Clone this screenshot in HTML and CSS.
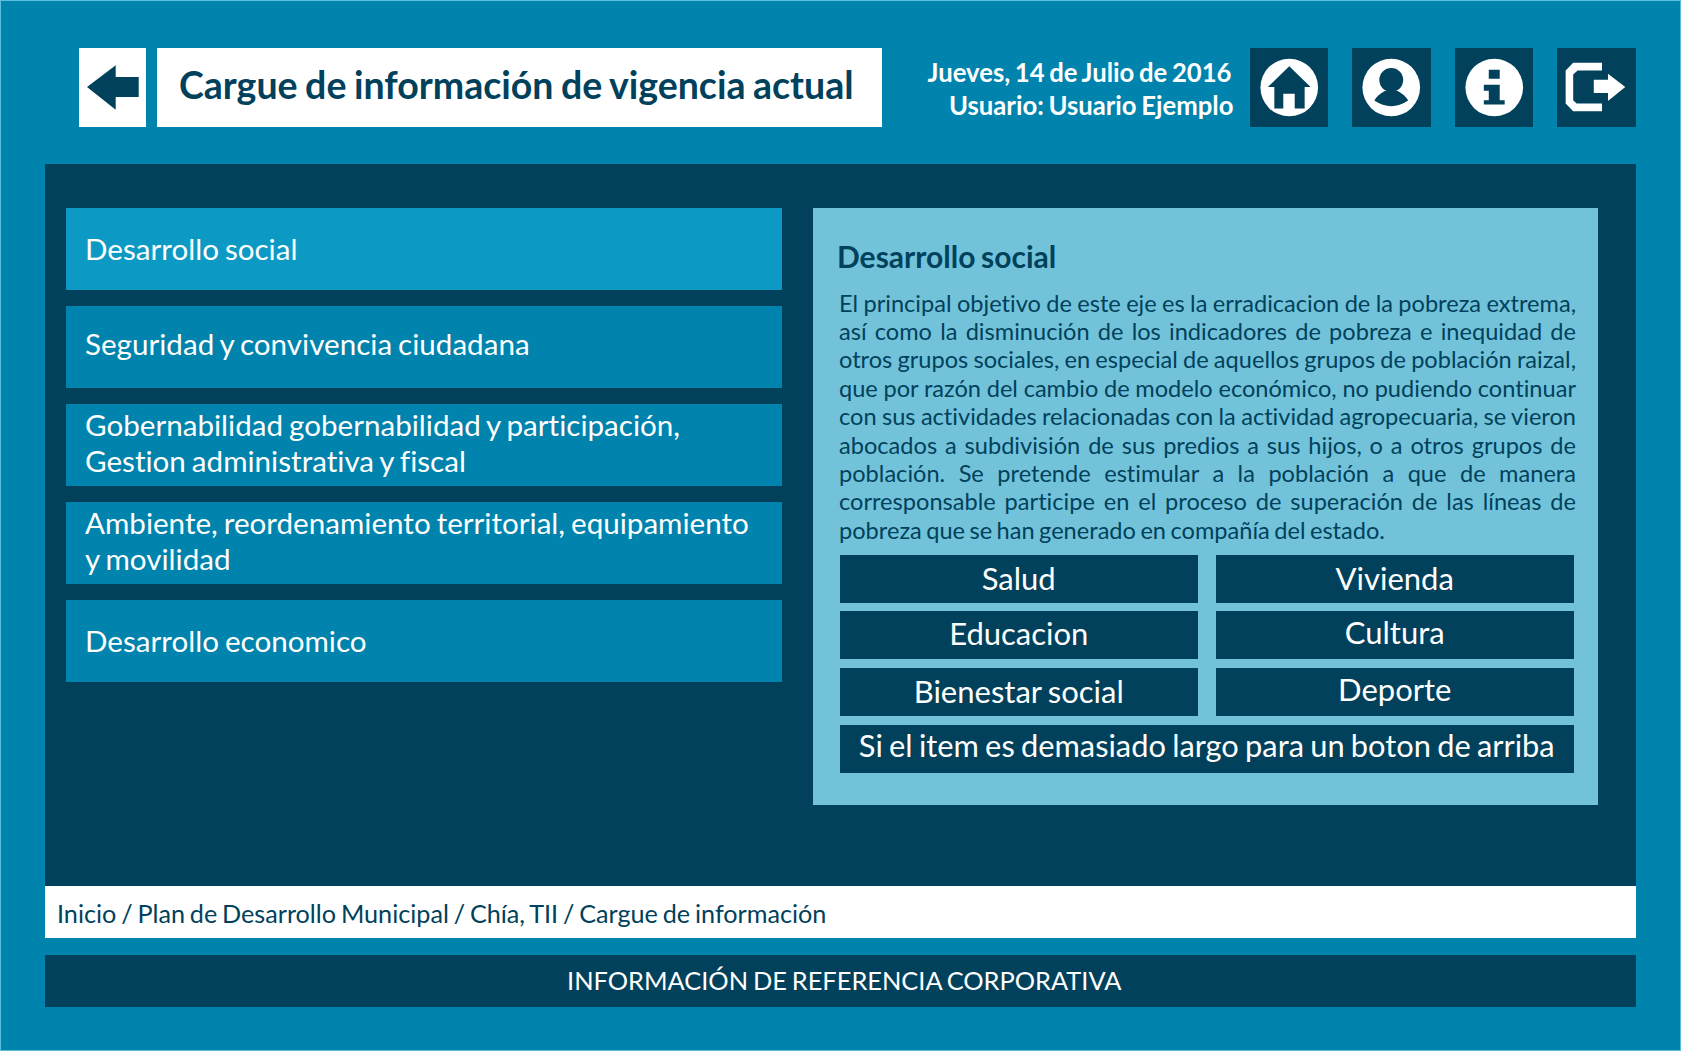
FILE: index.html
```html
<!DOCTYPE html>
<html lang="es">
<head>
<meta charset="utf-8">
<title>Cargue de información</title>
<link rel="stylesheet" href="styles.css">
</head>
<body>
<div class="page">
  <header class="header">
    <a class="back"><svg viewBox="0 0 67 79" width="67" height="79"><path class="dark" d="M8 39 36.7 17.3V29H59.7V49H36.7V61.7Z"/></svg></a>
    <h1 class="title">Cargue de información de vigencia actual</h1>
    <div class="meta">
      <div class="meta-date">Jueves, 14 de Julio de 2016</div>
      <div class="meta-user">Usuario: Usuario Ejemplo</div>
    </div>
    <nav class="icons">
      <a class="icon"><svg viewBox="0 0 79 79"><circle class="light" cx="39.5" cy="39.5" r="29"/><path class="dark" d="M39.5 18 61 39H55V60.7H45V45.7H33.5V60.7H24.5V39H18Z"/></svg></a>
      <a class="icon"><svg viewBox="0 0 79 79"><circle class="light" cx="39.5" cy="39.5" r="29"/><circle class="dark" cx="39.5" cy="32" r="12"/><path class="dark" d="M22.5 52.5Q26 46.5 33 43H46Q53 46.5 56.5 52.5Q39.5 64 22.5 52.5Z"/></svg></a>
      <a class="icon"><svg viewBox="0 0 79 79"><circle class="light" cx="39.5" cy="39.5" r="29"/><path class="dark" d="M34 21.7H45V30.7H34ZM29 36.7H45V52.3H50V56.7H29V52.3H34V42.7H29Z"/></svg></a>
      <a class="icon"><svg viewBox="0 0 79 79"><path class="light" d="M45.3 14.7H16.3L8.7 22.3V55.7L16.3 63.3H45.3V55.7H19.7L16.3 52.3V26.3L20.7 22.3H45.3ZM37 31.7H51.3V25.7L68.7 39 51.3 53V45H37Z"/></svg></a>
    </nav>
  </header>

  <main class="main">
    <div class="columns">
      <ul class="menu">
        <li class="menu-item active low">Desarrollo social</li>
        <li class="menu-item">Seguridad y convivencia ciudadana</li>
        <li class="menu-item two">Gobernabilidad gobernabilidad y participación, Gestion administrativa y fiscal</li>
        <li class="menu-item two">Ambiente, reordenamiento territorial, equipamiento y movilidad</li>
        <li class="menu-item low">Desarrollo economico</li>
      </ul>
      <section class="panel">
        <h2 class="panel-title">Desarrollo social</h2>
        <p class="panel-text">El principal objetivo de este eje es la erradicacion de la pobreza extrema, así como la disminución de los indicadores de pobreza e inequidad de otros grupos sociales, en especial de aquellos grupos de población raizal, que por razón del cambio de modelo económico, no pudiendo continuar con sus actividades relacionadas con la actividad agropecuaria, se vieron abocados a subdivisión de sus predios a sus hijos, o a otros grupos de población. Se pretende estimular a la población a que de manera corresponsable participe en el proceso de superación de las líneas de pobreza que se han generado en compañía del estado.</p>
        <div class="buttons">
          <a class="btn btn-salud">Salud</a>
          <a class="btn btn-salud">Vivienda</a>
          <a class="btn btn-edu">Educacion</a>
          <a class="btn btn-high1">Cultura</a>
          <a class="btn btn-low">Bienestar social</a>
          <a class="btn btn-high">Deporte</a>
          <a class="btn btn-wide">Si el item es demasiado largo para un boton de arriba</a>
        </div>
      </section>
    </div>
    <div class="crumbs">Inicio / Plan de Desarrollo Municipal / Chía, TII / Cargue de información</div>
  </main>

  <footer class="footer">INFORMACIÓN DE REFERENCIA CORPORATIVA</footer>
</div>
</body>
</html>
```
FILE: styles.css
```css
* { box-sizing: border-box; }
html, body { margin: 0; padding: 0; }
body {
  font-family: "Lato", "Liberation Sans", sans-serif;
  background: #0083ac;
  font-variant-ligatures: none;
  word-spacing: -0.1em;
}
.dark { fill: #01415b; }
.light { fill: #fff; }

.page {
  width: 1681px;
  height: 1051px;
  border: 1px solid #5cbfdc;
  background: #0083ac;
  padding: 47px 44.5px 0 44px;
  display: flex;
  flex-direction: column;
  overflow: hidden;
}

.header { display: flex; align-items: stretch; height: 79px; padding-left: 34px; }
.back { width: 67px; background: #fff; display: block; }
.back svg { display: block; }
.title {
  width: 725px;
  margin: 0 0 0 11px;
  padding: 0 0 7px 22px;
  background: #fff;
  color: #01415b;
  font-size: 37.5px;
  font-weight: 700;
  display: flex;
  align-items: center;
  white-space: nowrap;
}
.meta {
  margin-left: auto;
  margin-right: 16px;
  color: #fff;
  font-size: 25.7px;
  font-weight: 700;
  line-height: 33px;
  text-align: right;
  align-self: center;
  margin-top: 3px;
}
.meta-date { padding-right: 2px; }
.icons { display: flex; gap: 24px; }
.icon { width: 78.5px; background: #01415b; display: block; }
.icon svg { display: block; width: 78.5px; height: 79px; }

.main {
  margin-top: 37px;
  height: 774px;
  background: #01415b;
  display: flex;
  flex-direction: column;
}
.columns {
  flex: 1;
  display: flex;
  gap: 31px;
  padding: 44px 37.5px 0 21px;
  align-items: flex-start;
}
.menu {
  list-style: none;
  margin: 0;
  padding: 0;
  width: 716px;
  display: flex;
  flex-direction: column;
  gap: 16.4px;
}
.menu-item {
  height: 81.6px;
  background: #0083ac;
  color: #fff;
  font-size: 29.6px;
  line-height: 36px;
  padding: 0 24px 6px 19px;
  display: flex;
  align-items: center;
}
.menu-item.low { padding-bottom: 0; }
.menu-item.two { padding-bottom: 4px; }
.menu-item.active { background: #0c9ac5; }

.panel {
  width: 785px;
  height: 597px;
  background: #72c3da;
  padding: 28px 22px 0 24px;
  color: #01415b;
}
.panel-title { margin: 0; font-size: 30px; line-height: 40px; font-weight: 700; }
.panel-text {
  margin: 12.5px 0 0 2px;
  width: 737px;
  font-size: 23.6px;
  line-height: 28.4px;
  text-align: justify;
  height: 266.5px;
}
.buttons {
  margin: 0 0 0 3px;
  display: grid;
  grid-template-columns: 357.5px 357.5px;
  column-gap: 18.5px;
  row-gap: 8.3px;
}
.btn {
  height: 48px;
  background: #01415b;
  color: #fff;
  font-size: 31px;
  text-align: center;
  line-height: 47px;
  display: block;
}
.btn-salud { line-height: 47px; }
.btn-edu { line-height: 45px; }
.btn-high1 { line-height: 43px; }
.btn-low { line-height: 47px; }
.btn-high { line-height: 42px; }
.btn-wide { grid-column: 1 / 3; margin-top: 1px; line-height: 41px; white-space: nowrap; font-size: 30.8px; }

.crumbs {
  height: 52.5px;
  background: #fff;
  color: #01415b;
  font-size: 25.2px;
  line-height: 55px;
  padding-left: 12px;
}
.footer {
  margin-top: 16.5px;
  height: 52px;
  background: #01415b;
  color: #fff;
  font-size: 25.4px;
  line-height: 51px;
  text-align: center;
  padding-left: 8px;
}
```
